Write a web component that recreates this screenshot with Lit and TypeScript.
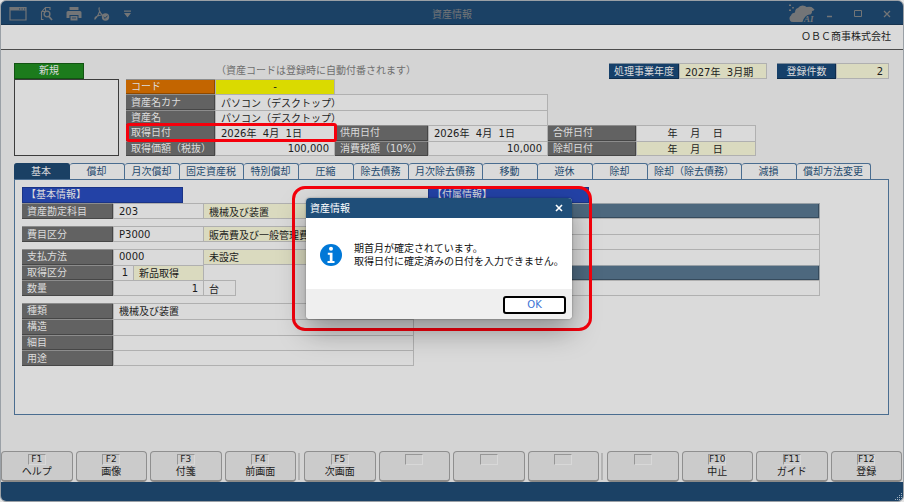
import { LitElement, html, css, nothing } from "lit";
import { customElement, property } from "lit/decorators.js";
import { classMap } from "lit/directives/class-map.js";

const base = css`
  * {
    box-sizing: border-box;
  }
  button,
  input {
    font: inherit;
    color: inherit;
    margin: 0;
    padding: 0;
    border: 0;
    border-radius: 0;
    background: none;
    min-width: 0;
    outline: none;
  }
  svg {
    display: block;
  }
`;

interface Field {
  id: string;
  label: string;
  value: string;
  cls?: string;
}

/* Common label and input looks shared by the header and the detail form. */
const fieldStyles = css`
  .cap {
    background: #626262;
    color: #dcdcdc;
    padding: 0 5px;
    display: flex;
    align-items: center;
    white-space: nowrap;
    line-height: 14px;
    min-height: 0;
    border-top: 1px solid #8c8c8c;
    box-shadow: inset -1px -1px #464646;
  }
  .box {
    width: 100%;
    height: 100%;
    min-height: 0;
    background: #dadada;
    color: #1c1c1c;
    padding: 0 5px 1px;
    border: 1px solid #b0b0b0;
    border-bottom-width: 0;
    line-height: 13px;
    white-space: pre;
  }
  .box + .box {
    border-left-width: 0;
  }
  .pale {
    background: #dadabf;
  }
  .num {
    text-align: right;
  }
  .end {
    border-bottom-width: 1px;
    padding-bottom: 0;
  }
`;

@customElement("title-bar")
export class TitleBar extends LitElement {
  static styles = [
    base,
    css`
      :host {
        display: grid;
        grid-template-columns: 1fr auto 1fr;
        align-items: center;
        height: 24px;
        background: #1b4165;
        color: #737577;
        border-bottom: 1px solid #16334f;
        padding: 2px 8px 0 8px;
      }
      .tools {
        display: flex;
        align-items: center;
        gap: 12px;
      }
      .wins {
        display: flex;
        align-items: center;
        justify-content: flex-end;
        gap: 11px;
      }
      .title {
        margin: 0;
        font-size: 10px;
        font-weight: 400;
      }
      .ai {
        font: italic bold 9px "Liberation Serif", serif;
      }
    `,
  ];

  render() {
    return html`
      <div class="tools">
        <button aria-label="ウィンドウ">
          <svg width="18" height="16" viewBox="0 0 18 16" fill="none" stroke="currentColor">
            <path d="M1 1.500h16v12.500H1z" stroke-width="1.200" />
            <path d="M1 3h16" stroke-width="3" />
            <path d="M10 3h1.200M12.500 3h1.200M15 3h1.200" stroke="#1b4165" stroke-width="1.200" />
          </svg>
        </button>
        <button aria-label="プレビュー">
          <svg width="15" height="16" viewBox="0 0 15 16" fill="none" stroke="currentColor">
            <path d="M4.500 13.500H2.500V6l4-4.500H11V4M6.500 2v3.500H3" stroke-width="1.100" />
            <circle cx="8" cy="8" r="2.900" stroke-width="1.400" />
            <path d="M10 10.500l3 3.500" stroke-width="1.800" />
          </svg>
        </button>
        <button aria-label="印刷">
          <svg width="16" height="16" viewBox="0 0 16 16" fill="currentColor">
            <path d="M3.500 1h9v3h-9z" />
            <path d="M2 5h12q1.500 0 1.500 1.500V12h-3V9h-9v3h-3V6.500Q.5 5 2 5z" />
            <path d="M4.500 10h7v4.500h-7z" />
            <path d="M6 12h4" stroke="#1b4165" stroke-width=".8" />
          </svg>
        </button>
        <button aria-label="PDF">
          <svg width="16" height="16" viewBox="0 0 16 16" fill="none" stroke="currentColor">
            <path d="M5.500 1.500q-1 1 0 3.500 1 2.500 3 4M5.800 5Q4.500 9.500 1 13q-.5-1.500 1.500-2.500Q5 9.200 8 9" stroke-width="1.100" />
            <circle cx="11.500" cy="11" r="3.700" fill="currentColor" stroke="none" />
            <path d="M9.700 11l1.400 1.400 2.400-2.700" stroke="#1b4165" stroke-width="1" />
          </svg>
        </button>
        <button aria-label="メニュー">
          <svg width="12" height="16" viewBox="0 0 12 16" fill="currentColor">
            <path d="M2 4.500h7v1.200H2zM2 7h7l-3.500 4.500z" />
          </svg>
        </button>
      </div>
      <h1 class="title">資産情報</h1>
      <div class="wins">
        <button aria-label="AI">
          <svg width="28" height="20" viewBox="0 0 28 20" fill="currentColor">
            <path
              d="M2 16.500q-1.500-3 1-5 .5-2.500 4-3Q7 4.500 10 4q1.500-2.500 4.500-2.500T18.500 3q3-.5 5 0l3 2.500q-1 1.500-2.500 1.500.5 2-1.500 3.500-2.500-.5-5 2Q15 15 14.500 18H5q-2.500 0-3-1.500z"
            />
            <path d="M1 .5h2v1.500H1zM4.200 3h1.600v1.600H4.200zM1 5.500h2V7H1z" />
            <text class="ai" x="16" y="18">AI</text>
          </svg>
        </button>
        <button aria-label="最小化">
          <svg width="8" height="16" viewBox="0 0 8 16" stroke="currentColor" stroke-width="1.300"><path d="M0 10.500h5" /></svg>
        </button>
        <button aria-label="最大化">
          <svg width="18" height="16" viewBox="0 0 18 16" fill="none" stroke="currentColor">
            <path d="M8.500 4.500h7v6h-7z" />
          </svg>
        </button>
        <button aria-label="閉じる">
          <svg width="20" height="16" viewBox="0 0 20 16" stroke="currentColor" stroke-width="1.300">
            <path d="M9 5l6 6M15 5l-6 6" />
          </svg>
        </button>
      </div>
    `;
  }
}

@customElement("asset-header")
export class AssetHeader extends LitElement {
  static styles = [
    base,
    fieldStyles,
    css`
      :host {
        display: block;
      }
      .status {
        display: flex;
        height: 16px;
        align-items: stretch;
      }
      .badge {
        width: 70px;
        background: #1c7b1c;
        border: 1px solid #125412;
        color: #dcdcdc;
        text-align: center;
        line-height: 14px;
      }
      .note {
        flex: 1;
        margin-left: 132px;
        color: #6e6e6e;
        line-height: 15px;
        white-space: nowrap;
      }
      .pair {
        display: flex;
        margin-left: 10px;
      }
      .navy {
        background: #16406a;
        border-color: #7d8c9b;
        box-shadow: inset -1px -1px #0e2c4b;
        justify-content: center;
      }
      .year {
        width: 88px;
      }
      .count {
        width: 53px;
      }
      .navy.wide {
        width: 70px;
      }
      .navy.mid {
        width: 59px;
      }
      .body {
        display: flex;
        gap: 7px;
      }
      .photo {
        width: 105px;
        border: 1px solid #3c3c3c;
        background: #dadada;
      }
      .grid {
        position: relative;
        display: grid;
        grid-template-columns: 89px 120px 93px 120px 88px 120px;
        grid-template-rows: repeat(5, minmax(0, 1fr));
        height: 77px;
      }
      .span3 {
        grid-column: span 3;
      }
      .line {
        grid-column-start: 1;
      }
      .orange {
        background: #c36500;
        box-shadow: inset -1px -1px #8d4900;
      }
      .yellow {
        background: #dada00;
        text-align: center;
      }
      .mark {
        position: absolute;
        left: 0;
        top: 44px;
        width: 211px;
        height: 19px;
        border: 3px solid #f5000c;
        border-radius: 3px;
        pointer-events: none;
      }
    `,
  ];

  private field(f: Field, first = false) {
    return html`
      <label class=${classMap({ cap: true, line: first, orange: f.id === "code" })} for=${f.id}>${f.label}</label>
      <input class=${"box " + (f.cls ?? "")} id=${f.id} .value=${f.value} />
    `;
  }

  render() {
    return html`
      <div class="status">
        <div class="badge">新規</div>
        <div class="note">（資産コードは登録時に自動付番されます）</div>
        <div class="pair">
          <label class="cap navy wide" for="year">処理事業年度</label>
          <input class="box pale end year" id="year" readonly .value=${"2027年  3月期"} />
        </div>
        <div class="pair">
          <label class="cap navy mid" for="count">登録件数</label>
          <input class="box pale end num count" id="count" readonly .value=${"2"} />
        </div>
      </div>
      <div class="body">
        <div class="photo"></div>
        <div class="grid">
          ${this.field({ id: "code", label: "コード", value: "-", cls: "yellow" }, true)}
          ${this.field({ id: "kana", label: "資産名カナ", value: "パソコン（デスクトップ）", cls: "span3" }, true)}
          ${this.field({ id: "name", label: "資産名", value: "パソコン（デスクトップ）", cls: "span3" }, true)}
          ${this.field({ id: "acq", label: "取得日付", value: "2026年  4月  1日" }, true)}
          ${this.field({ id: "use", label: "供用日付", value: "2026年  4月  1日" })}
          ${this.field({ id: "merge", label: "合併日付", value: "        年    月    日" })}
          ${this.field({ id: "price", label: "取得価額（税抜）", value: "100,000", cls: "num end" }, true)}
          ${this.field({ id: "tax", label: "消費税額（10%）", value: "10,000", cls: "num end" })}
          ${this.field({ id: "retire", label: "除却日付", value: "        年    月    日", cls: "pale end" })}
          <div class="mark"></div>
        </div>
      </div>
    `;
  }
}

@customElement("detail-panel")
export class DetailPanel extends LitElement {
  static styles = [
    base,
    fieldStyles,
    css`
      :host {
        display: flex;
        flex-direction: column;
        flex: 1;
      }
      .tabs {
        display: flex;
      }
      .tab {
        min-width: 55px;
        height: 16px;
        padding: 0 7px 0 6px;
        border: 1px solid #4a6d90;
        border-left-width: 0;
        border-bottom-width: 0;
        border-radius: 3px 3px 0 0;
        background: #dadada;
        color: #24496d;
        line-height: 15px;
        white-space: nowrap;
      }
      .tab.on {
        min-width: 56px;
        background: #1a4064;
        border-color: #1a4064;
        color: #dcdcdc;
      }
      .panel {
        flex: 1;
        display: flex;
        gap: 14px;
        border: 1px solid #4a6d90;
        background: #dadada;
        padding: 7px;
      }
      .left {
        flex: 0 0 392px;
        display: flex;
        flex-direction: column;
        gap: 7px;
      }
      .right {
        flex: 0 0 392px;
      }
      .group {
        display: grid;
        grid-template-columns: 91px 21px 70px 32px 1fr;
        grid-auto-rows: minmax(0, 1fr);
      }
      .g1 {
        height: 16px;
      }
      .g2 {
        height: 32px;
      }
      .g3 {
        height: 47px;
      }
      .g4 {
        height: 63px;
      }
      .g7 {
        height: 109px;
        grid-template-columns: 1fr;
      }
      .cap {
        grid-column-start: 1;
      }
      .s2 {
        grid-column: span 2;
      }
      .s4 {
        grid-column: span 4;
      }
      .sect {
        grid-column: 1 / -1;
        width: 161px;
        margin: 0;
        padding: 0 3px;
        border: 1px solid #1b3486;
        background: #2342a6;
        color: #dcdcdc;
        font-size: 10px;
        font-weight: 400;
        line-height: 13px;
      }
      .bar {
        background: #4d687e;
        border: 1px solid #98a0a6;
        border-bottom-width: 0;
        box-shadow: inset -1px -1px #364b5d;
      }
    `,
  ];

  private tabs = [
    "基本", "償却", "月次償却", "固定資産税", "特別償却", "圧縮", "除去債務",
    "月次除去債務", "移動", "遊休", "除却", "除却（除去債務）", "減損", "償却方法変更",
  ];

  /* Supplement list: caption bars, each followed by its blank rows. */
  private extras = ["bar", "box", "box", "box", "bar", "box end"];

  private row(id: string, label: string, cells: [string, string][]) {
    return html`
      <label class="cap" for=${id}>${label}</label>
      ${cells.map(
        ([value, cls], i) => html`
          <input
            class=${"box " + cls}
            id=${i ? `${id}-${i}` : id}
            aria-label=${i ? label : nothing}
            .value=${value}
          />
        `,
      )}
    `;
  }

  render() {
    return html`
      <div class="tabs" role="tablist">
        ${this.tabs.map(
          (t, i) => html`
            <button class=${classMap({ tab: true, on: i === 0 })} role="tab" aria-selected=${i === 0 ? "true" : "false"}>${t}</button>
          `,
        )}
      </div>
      <div class="panel" role="tabpanel">
        <div class="left">
          <div class="group g2">
            <h2 class="sect">【基本情報】</h2>
            ${this.row("account", "資産勘定科目", [["203", "s2 end"], ["機械及び装置", "s2 pale end"]])}
          </div>
          <div class="group g1">
            ${this.row("expense", "費目区分", [["P3000", "s2 end"], ["販売費及び一般管理費", "s2 pale end"]])}
          </div>
          <div class="group g3">
            ${this.row("payment", "支払方法", [["0000", "s2"], ["未設定", "s2 pale end"]])}
            ${this.row("kind", "取得区分", [["1", "num"], ["新品取得", "pale"]])}
            ${this.row("qty", "数量", [["1", "s2 num end"], ["台", "end"]])}
          </div>
          <div class="group g4">
            ${this.row("type", "種類", [["機械及び装置", "s4"]])}
            ${this.row("structure", "構造", [["", "s4"]])}
            ${this.row("item", "細目", [["", "s4"]])}
            ${this.row("purpose", "用途", [["", "s4 end"]])}
          </div>
        </div>
        <div class="right">
          <div class="group g7">
            <h2 class="sect">【付属情報】</h2>
            ${this.extras.map((kind) => html`<div class=${kind}></div><!---->`)}
          </div>
        </div>
      </div>
    `;
  }
}

@customElement("function-keys")
export class FunctionKeys extends LitElement {
  static styles = [
    base,
    css`
      :host {
        display: flex;
        padding: 0 1px 0 0;
      }
      .group {
        flex: 1;
        display: flex;
        gap: 3px;
      }
      .sep {
        width: 2px;
        margin: 2px 4px 2px 2px;
        background: #b4b4b4;
      }
      .key {
        flex: 1;
        height: 31px;
        border: 1px solid #8f8f8f;
        border-bottom: 2px solid #8c8a88;
        border-radius: 4px;
        background: #cbcbcb;
        color: #1c1c1c;
        display: flex;
        flex-direction: column;
        align-items: center;
        padding-top: 2px;
      }
      .code {
        width: 18px;
        height: 11px;
        border: 1px solid #d8d8d8;
        border-top-color: #969696;
        border-left-color: #969696;
        display: flex;
        justify-content: center;
        line-height: 9px;
        font-size: 9px;
      }
      .name {
        line-height: 14px;
      }
    `,
  ];

  private keys = [
    [["F1", "ヘルプ"], ["F2", "画像"], ["F3", "付箋"], ["F4", "前画面"]],
    [["F5", "次画面"], ["", ""], ["", ""], ["", ""]],
    [["", ""], ["F10", "中止"], ["F11", "ガイド"], ["F12", "登録"]],
  ];

  render() {
    return this.keys.map(
      (group, i) => html`
        ${i ? html`<div class="sep"></div>` : nothing}
        <div class="group">
          ${group.map(
            ([code, name]) => html`
              <button class="key" ?disabled=${!code}><span class="code">${code}</span><span class="name">${name}</span></button>
            `,
          )}
        </div>
      `,
    );
  }
}

@customElement("message-dialog")
export class MessageDialog extends LitElement {
  @property() heading = "";

  static styles = [
    base,
    css`
      :host {
        display: block;
        width: 300px;
        padding: 9px 17px 9px 11px;
        border: 3px solid #f5000c;
        border-radius: 13px;
      }
      .dialog {
        border-radius: 4px;
        overflow: hidden;
        background: #fff;
        color: #111;
        box-shadow: 0 12px 28px rgba(0, 0, 0, 0.35), 0 0 2px rgba(0, 0, 0, 0.4);
      }
      .head {
        display: flex;
        justify-content: space-between;
        align-items: center;
        height: 20px;
        padding: 0 8px 2px 4px;
        background: #1f4e79;
        color: #fff;
      }
      .body {
        display: flex;
        align-items: center;
        gap: 12px;
        height: 71px;
        padding: 3px 0 0 14px;
      }
      .msg {
        margin: 0;
        line-height: 13px;
        white-space: nowrap;
      }
      .foot {
        display: flex;
        justify-content: flex-end;
        padding: 7px 6px 5px;
        background: #efefef;
      }
      .ok {
        width: 63px;
        height: 18px;
        border: 2px solid #000;
        border-radius: 3px;
        background: #fff;
        color: #3b74d4;
        line-height: 14px;
      }
    `,
  ];

  render() {
    return html`
      <div class="dialog" role="alertdialog" aria-label=${this.heading}>
        <div class="head">
          <span>${this.heading}</span>
          <button aria-label="閉じる">
            <svg width="10" height="10" viewBox="0 0 10 10" stroke="currentColor" stroke-width="1.600">
              <path d="M2 3l6 6M8 3l-6 6" />
            </svg>
          </button>
        </div>
        <div class="body">
          <svg width="22" height="22" viewBox="0 0 22 22">
            <circle cx="11" cy="11" r="11" fill="#0078d7" />
            <circle cx="11" cy="4.800" r="2" fill="#fff" />
            <path d="M7.800 8.800h4.700v8.200h2v1.900H7.500V17h2.300v-6.300h-2z" fill="#fff" />
          </svg>
          <p class="msg">期首月が確定されています。<br />取得日付に確定済みの日付を入力できません。</p>
        </div>
        <div class="foot"><button class="ok">OK</button></div>
      </div>
    `;
  }
}

@customElement("app-root")
export class AppRoot extends LitElement {
  static styles = [
    base,
    css`
      :host {
        display: block;
        font-family: "DejaVu Sans", "Noto Sans CJK JP", sans-serif;
        font-size: 10px;
        background: #e4e4e4;
      }
      .window {
        position: relative;
        display: flex;
        flex-direction: column;
        min-height: 100vh;
        border: 1px solid #9aa0a6;
        border-radius: 6px;
        overflow: hidden;
        background: #d4d4d4;
      }
      .company {
        height: 25px;
        padding-right: 12px;
        background: #dadada;
        border-bottom: 1px solid #4c4c4c;
        color: #1c1c1c;
        text-align: right;
        line-height: 23px;
      }
      .main {
        flex: 1;
        display: flex;
        flex-direction: column;
        gap: 7px;
        padding: 13px 14px 36px 13px;
      }
      .status {
        display: flex;
        justify-content: flex-end;
        align-items: flex-end;
        height: 19px;
        background: #1b4165;
      }
      .notice {
        position: absolute;
        left: 291px;
        top: 185px;
      }
    `,
  ];

  render() {
    return html`
      <div class="window">
        <title-bar></title-bar>
        <div class="company">ＯＢＣ商事株式会社</div>
        <main class="main">
          <asset-header></asset-header>
          <detail-panel></detail-panel>
        </main>
        <function-keys></function-keys>
        <footer class="status">
          <svg width="8" height="8" viewBox="0 0 8 8" fill="#9fb0bf">
            <path d="M6 0h1v1H6zM4 2h1v1H4zM6 2h1v1H6zM2 4h1v1H2zM4 4h1v1H4zM6 4h1v1H6zM0 6h1v1H0zM2 6h1v1H2zM4 6h1v1H4zM6 6h1v1H6z" />
          </svg>
        </footer>
        <message-dialog class="notice" heading="資産情報"></message-dialog>
      </div>
    `;
  }
}
